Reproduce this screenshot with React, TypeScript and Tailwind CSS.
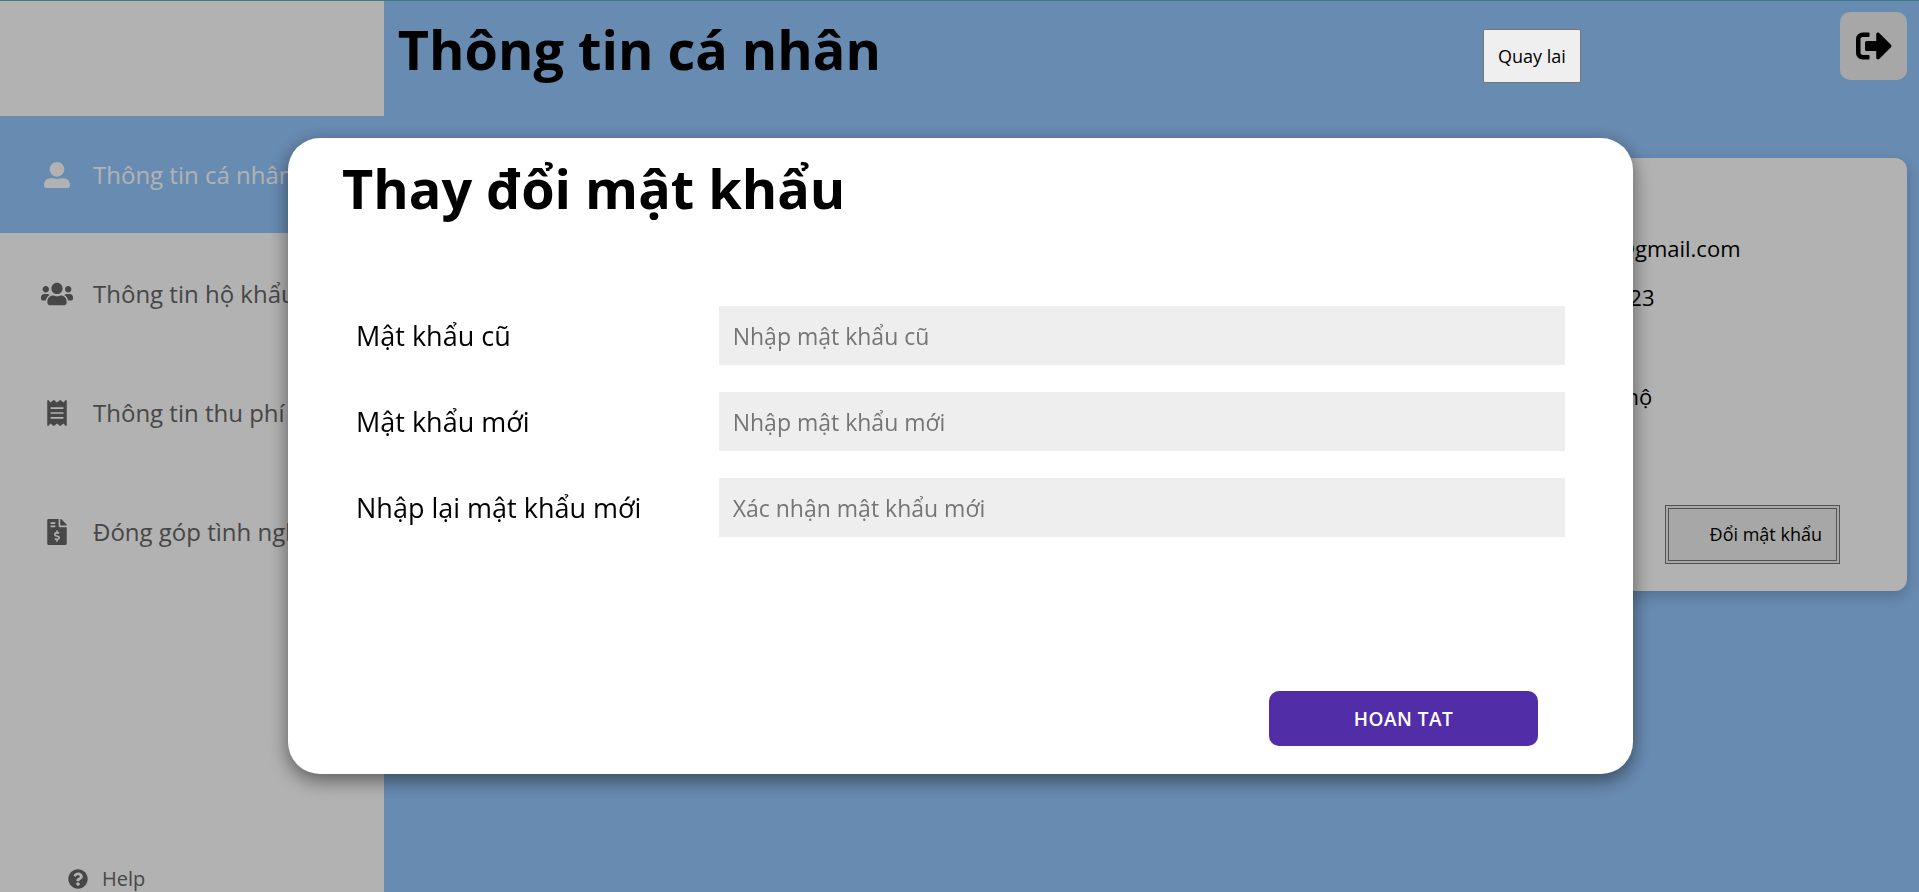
import React from "react";
import {
  FaFileInvoiceDollar,
  FaQuestionCircle,
  FaReceipt,
  FaSignOutAlt,
  FaUserAlt,
  FaUsers,
} from "react-icons/fa";

const menu = [
  { label: "Thông tin cá nhân", Icon: FaUserAlt, active: true },
  { label: "Thông tin hộ khẩu", Icon: FaUsers, active: false },
  { label: "Thông tin thu phí", Icon: FaReceipt, active: false },
  { label: "Đóng góp tình nghĩa", Icon: FaFileInvoiceDollar, active: false },
];

const fields = [
  { id: "old-password", label: "Mật khẩu cũ", placeholder: "Nhập mật khẩu cũ" },
  { id: "new-password", label: "Mật khẩu mới", placeholder: "Nhập mật khẩu mới" },
  { id: "confirm-password", label: "Nhập lại mật khẩu mới", placeholder: "Xác nhận mật khẩu mới" },
];

function Sidebar() {
  return (
    <aside className="flex w-1/5 shrink-0 flex-col justify-between bg-white pt-[115px] text-[#666]">
      <nav className="flex flex-col gap-0.5">
        {menu.map(({ label, Icon, active }) => (
          <a
            key={label}
            href="#"
            className={
              active
                ? "flex h-[117px] items-center gap-5 whitespace-nowrap bg-[#96c8ff] pl-[41px] text-2xl text-white"
                : "flex h-[117px] items-center gap-5 whitespace-nowrap pl-[41px] text-2xl"
            }
          >
            <span className="flex w-8 justify-center">
              <Icon className={Icon === FaUsers ? "size-8" : "size-[26px]"} />
            </span>
            {label}
          </a>
        ))}
      </nav>
      <a href="#" className="flex items-center gap-3.5 pl-[68px] text-xl leading-[26px]">
        <FaQuestionCircle className="size-5" />
        Help
      </a>
    </aside>
  );
}

function ProfileCard() {
  return (
    <section className="flex h-[433px] flex-col justify-between rounded-xl bg-white pt-[66px] pr-[67px] pb-[27px] shadow-[0_5px_15px_rgba(0,0,0,0.2)]">
      <div className="flex justify-end">
        <dl className="w-[261px] text-[22px] leading-[49px]">
          <dd>abc@gmail.com</dd>
          <dd>000123</dd>
          <dd className="mt-[50px]">Chủ hộ</dd>
        </dl>
      </div>
      <button className="h-[59px] self-end border-4 border-double border-[#767676] bg-[#efefef] pr-3.5 pb-0.5 pl-[41px] text-lg">
        Đổi mật khẩu
      </button>
    </section>
  );
}

function PasswordDialog() {
  return (
    <div className="fixed inset-0 flex items-start bg-black/30 pt-[138px] pr-[286px] pl-72">
      <form
        role="dialog"
        aria-labelledby="dialog-title"
        className="flex grow flex-col rounded-[32px] bg-white px-[54px] pt-3 pb-7 shadow-[0_6px_20px_rgba(0,0,0,0.5)]"
      >
        <h2 id="dialog-title" className="text-[54px] leading-[76px] font-bold">
          Thay đổi mật khẩu
        </h2>
        <div className="mt-20 flex flex-col gap-[27px] pr-3.5 pl-3.5">
          {fields.map((f) => (
            <div key={f.id} className="flex items-center">
              <label htmlFor={f.id} className="w-[30%] text-[27px] leading-9">
                {f.label}
              </label>
              <input
                id={f.id}
                type="password"
                placeholder={f.placeholder}
                className="h-[59px] w-[70%] bg-[#eee] px-3.5 text-[23px] placeholder:text-[#757575]"
              />
            </div>
          ))}
        </div>
        <button
          type="button"
          className="mt-[154px] mr-[41px] h-[55px] w-[269px] self-end rounded-[10px] bg-[#512da8] pt-0.5 text-[19px] font-semibold tracking-wide text-white"
        >
          HOAN TAT
        </button>
      </form>
    </div>
  );
}

export default function App() {
  return (
    <div className="flex h-screen overflow-hidden border-t border-[#5aafc3] bg-[#96c8ff] font-['Open_Sans',sans-serif] text-black">
      <Sidebar />
      <main className="flex grow flex-col p-3 pt-[11px]">
        <header className="mb-[78px] flex h-[68px] items-center justify-between">
          <h1 className="pt-1.5 pl-0.5 text-[54px] leading-[76px] font-bold">Thông tin cá nhân</h1>
          <div className="flex w-[424px] items-center justify-between">
            <button className="relative z-10 mt-5 h-[54px] rounded-xs border border-[#767676] bg-[#efefef] px-3.5 text-lg">
              Quay lai
            </button>
            <button
              aria-label="Đăng xuất"
              className="flex h-[68px] w-[67px] items-center justify-center rounded-[10px] bg-[#efefef]"
            >
              <FaSignOutAlt className="size-9" />
            </button>
          </div>
        </header>
        <ProfileCard />
      </main>
      <PasswordDialog />
    </div>
  );
}
